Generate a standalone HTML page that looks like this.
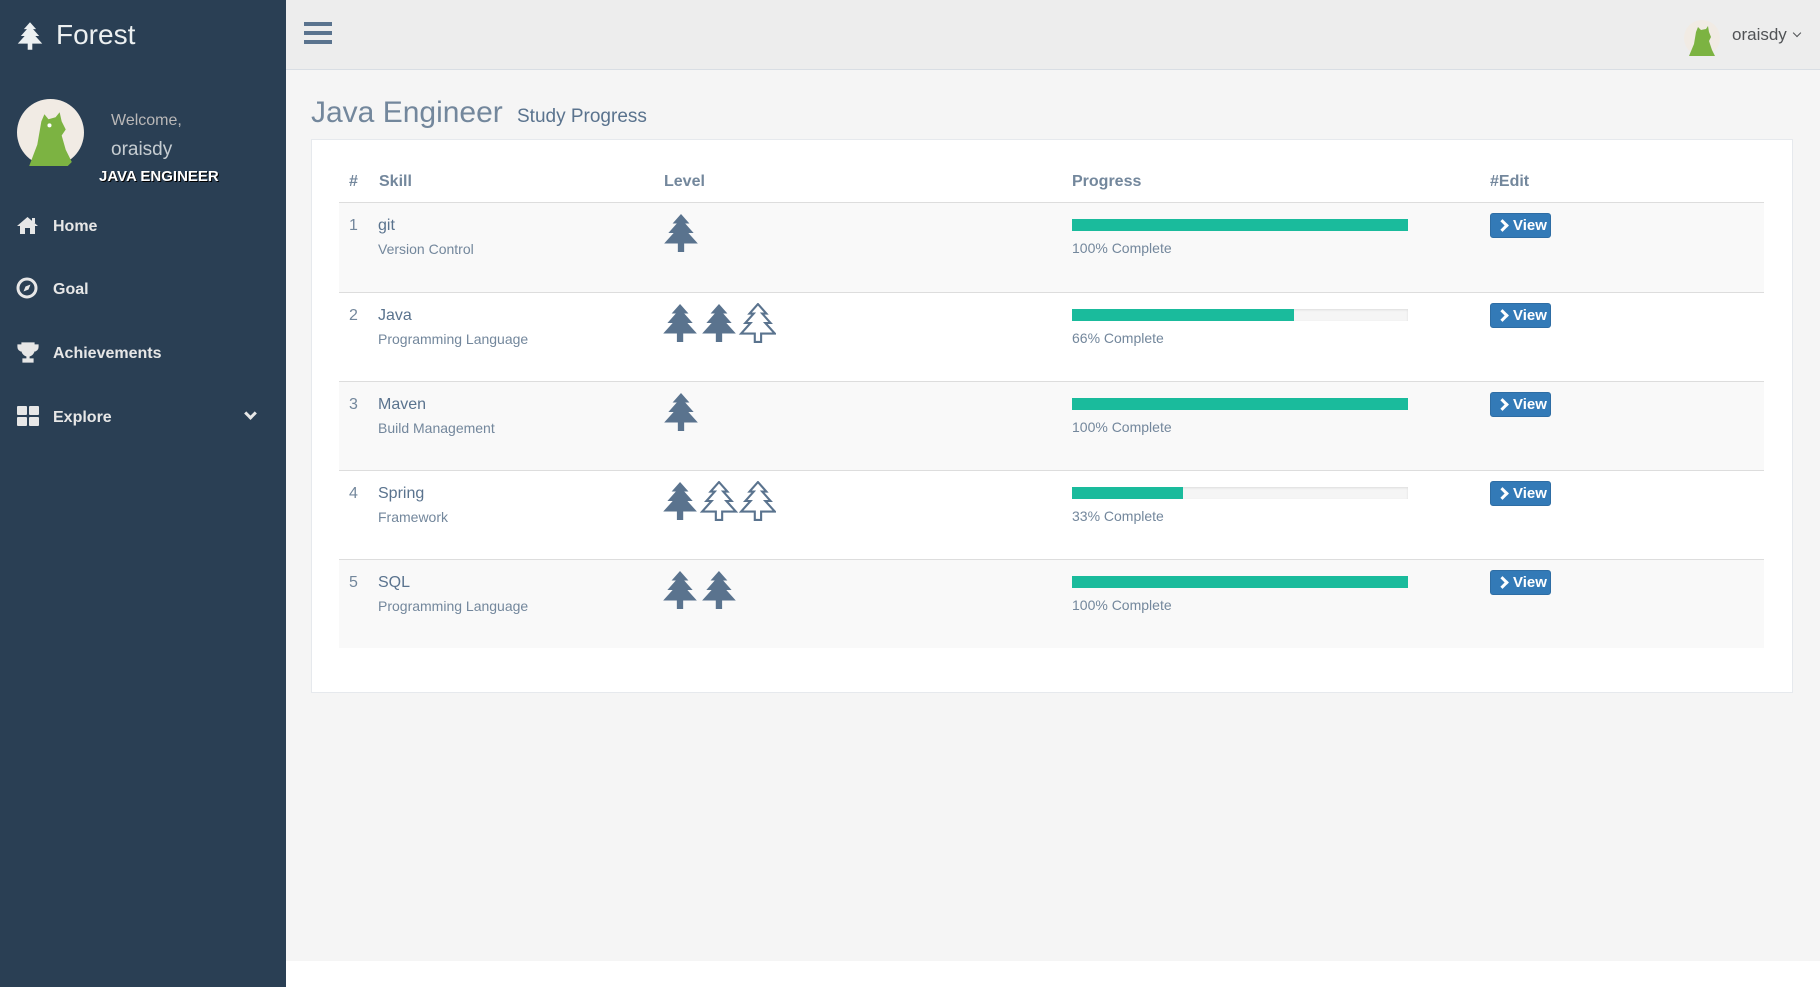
<!DOCTYPE html>
<html><head><meta charset="utf-8"><style>
*{box-sizing:border-box;margin:0;padding:0}
body{width:1820px;height:987px;overflow:hidden;font-family:"Liberation Sans",sans-serif;background:#f5f5f5;color:#73879C;position:relative}
.side{position:absolute;left:0;top:0;width:286px;height:987px;background:#2A3F54;color:#ECF0F1}
.top{position:absolute;left:286px;top:0;right:0;height:70px;background:#EDEDED;border-bottom:1px solid #D9DEE4}
.foot{position:absolute;left:286px;top:961px;right:0;bottom:0;background:#fff}
.abs{position:absolute;white-space:nowrap}
.nav{position:absolute;left:53px;font-size:16px;font-weight:bold;color:#E7E7E7}
.panel{position:absolute;left:311px;top:139px;width:1482px;height:554px;background:#fff;border:1px solid #E6E9ED}
.row{position:absolute;left:339px;width:1425px;height:89px;border-top:1px solid #ddd}
.th{position:absolute;top:173px;font-size:16px;font-weight:bold;color:#73879C}
.bar{position:absolute;left:733px;top:16px;width:336px;height:12px;background:#f5f5f5;box-shadow:inset 0 1px 2px rgba(0,0,0,.1)}
.bar i{display:block;height:100%;background:#1ABB9C}
.btn{position:absolute;left:1151px;top:10px;width:61px;height:25px;background:#337ab7;border:1px solid #2e6da4;border-radius:3px;color:#fff;font-size:15px;font-weight:bold;line-height:23px;padding-left:22px}
.btn:before{content:"";position:absolute;left:7px;top:7px;width:6px;height:6px;border-top:3px solid #fff;border-right:3px solid #fff;transform:rotate(45deg)}
.n{position:absolute;left:10px;top:14px;font-size:16px}
.sk{position:absolute;left:39px;top:14px;font-size:16px;color:#5A738E}
.sub{position:absolute;left:39px;top:38px;font-size:14px}
.pc{position:absolute;left:733px;top:37px;font-size:14px}
.tr{position:absolute;top:10px;left:323px}
</style></head><body>
<svg width="0" height="0" style="position:absolute"><defs>
<path id="tree" d="M17 1 L25 10 L21 10 L29 19 L24 19 L33 29 L20 29 L20 37 L14 37 L14 29 L1 29 L10 19 L5 19 L13 10 L9 10 Z"/>
</defs></svg>
<div class="side">
<svg class="abs" style="left:17px;top:21px" width="26" height="30" viewBox="0 0 34 38"><use href="#tree" fill="#ECF0F1"/></svg>
<div class="abs" style="left:56px;top:19px;font-size:28px;color:#ECF0F1">Forest</div>
<svg class="abs" style="left:17px;top:99px" width="67" height="67" viewBox="0 0 66 66"><circle cx="33" cy="33" r="33" fill="#f1ebe4"/><path d="M12 66 L20 45 L24 22 L27 15 L31 20 L38 18 L42 13 L44 22 L48 30 L44 36 L48 50 L54 62 L50 66Z" fill="#7cb342"/><circle cx="32" cy="26" r="2" fill="#fff"/></svg>
<div class="abs" style="left:111px;top:112px;font-size:16px;color:#BAB8B8">Welcome,</div>
<div class="abs" style="left:111px;top:139px;font-size:19px;color:#ECF0F1;opacity:.8">oraisdy</div>
<div class="abs" style="left:99px;top:168px;font-size:15px;font-weight:bold;color:#fff;text-shadow:1px 1px 0 #000">JAVA ENGINEER</div>
<svg class="abs" style="left:17px;top:216px" width="21" height="18" viewBox="0 0 21 18"><path d="M10.5 1 L0 10 L3 10 L3 18 L8 18 L8 12 L13 12 L13 18 L18 18 L18 10 L21 10 Z" fill="#E7E7E7"/><rect x="15" y="2" width="3" height="5" fill="#E7E7E7"/></svg>
<div class="nav" style="top:218px">Home</div>
<svg class="abs" style="left:16px;top:277px" width="22" height="22" viewBox="0 0 22 22"><circle cx="11" cy="11" r="9" fill="none" stroke="#E7E7E7" stroke-width="3"/><path d="M14.5 7.5 L12.5 12.5 L7.5 14.5 L9.5 9.5Z" fill="#E7E7E7"/></svg>
<div class="nav" style="top:281px">Goal</div>
<svg class="abs" style="left:17px;top:342px" width="22" height="22" viewBox="0 0 22 22"><path d="M5 1 H17 V8 A6 6 0 0 1 12 14 V17 H16 V20 H6 V17 H10 V14 A6 6 0 0 1 5 8Z M5 3 H1 V5 A4 4 0 0 0 5 9 M17 3 H21 V5 A4 4 0 0 1 17 9" fill="#E7E7E7" stroke="#E7E7E7" stroke-width="1.2"/></svg>
<div class="nav" style="top:345px">Achievements</div>
<svg class="abs" style="left:17px;top:406px" width="22" height="20" viewBox="0 0 22 20"><rect x="0" y="0" width="10" height="9" rx="1" fill="#E7E7E7"/><rect x="12" y="0" width="10" height="9" rx="1" fill="#E7E7E7"/><rect x="0" y="11" width="10" height="9" rx="1" fill="#E7E7E7"/><rect x="12" y="11" width="10" height="9" rx="1" fill="#E7E7E7"/></svg>
<div class="nav" style="top:409px">Explore</div>
<div class="abs" style="left:246px;top:409px;width:9px;height:9px;border-right:3px solid #E7E7E7;border-bottom:3px solid #E7E7E7;transform:rotate(45deg)"></div>
</div>
<div class="top">
<div class="abs" style="left:18px;top:22px;width:28px;height:4px;background:#5A738E;box-shadow:0 9px 0 #5A738E,0 18px 0 #5A738E"></div>
<svg class="abs" style="left:1398px;top:20px" width="36" height="36" viewBox="0 0 36 36"><circle cx="18" cy="18" r="18" fill="#f1ebe4"/><path d="M5 36 L10 24 L12 12 L14 7 L17 10 L22 9 L24 6 L25 12 L27 17 L25 21 L28 30 L31 36Z" fill="#7cb342"/></svg>
<div class="abs" style="left:1446px;top:25px;font-size:17px;color:#515356">oraisdy</div>
<div class="abs" style="left:1508px;top:30px;width:6px;height:6px;border-right:1.5px solid #515356;border-bottom:1.5px solid #515356;transform:rotate(45deg)"></div>
</div>
<div class="abs" style="left:311px;top:96px;font-size:30px;color:#73879C">Java Engineer</div>
<div class="abs" style="left:517px;top:106px;font-size:19px;color:#5A738E">Study Progress</div>
<div class="panel"></div>
<div class="th" style="left:349px">#</div>
<div class="th" style="left:379px">Skill</div>
<div class="th" style="left:664px">Level</div>
<div class="th" style="left:1072px">Progress</div>
<div class="th" style="left:1490px">#Edit</div>
<div class="abs" style="left:339px;top:202px;width:1425px;height:2px;background:#ddd"></div>

<div class="row" style="top:203px;background:#f9f9f9;border-top:none">
<div class="n">1</div><div class="sk">git</div><div class="sub">Version Control</div>
<svg class="tr" width="38" height="40" viewBox="0 0 34 38"><use href="#tree" fill="#5A738E"/></svg>
<div class="bar"><i style="width:100%"></i></div><div class="pc">100% Complete</div><div class="btn">View</div></div>

<div class="row" style="top:292px;background:#fff">
<div class="n">2</div><div class="sk">Java</div><div class="sub">Programming Language</div>
<svg class="tr" width="114" height="40" viewBox="0 0 108 38"><use href="#tree" fill="#5A738E"/><use href="#tree" x="37" fill="#5A738E"/><use href="#tree" x="74" fill="none" stroke="#5A738E" stroke-width="2"/></svg>
<div class="bar"><i style="width:66%"></i></div><div class="pc">66% Complete</div><div class="btn">View</div></div>

<div class="row" style="top:381px;background:#f9f9f9">
<div class="n">3</div><div class="sk">Maven</div><div class="sub">Build Management</div>
<svg class="tr" width="38" height="40" viewBox="0 0 34 38"><use href="#tree" fill="#5A738E"/></svg>
<div class="bar"><i style="width:100%"></i></div><div class="pc">100% Complete</div><div class="btn">View</div></div>

<div class="row" style="top:470px;background:#fff">
<div class="n">4</div><div class="sk">Spring</div><div class="sub">Framework</div>
<svg class="tr" width="114" height="40" viewBox="0 0 108 38"><use href="#tree" fill="#5A738E"/><use href="#tree" x="37" fill="none" stroke="#5A738E" stroke-width="2"/><use href="#tree" x="74" fill="none" stroke="#5A738E" stroke-width="2"/></svg>
<div class="bar"><i style="width:33%"></i></div><div class="pc">33% Complete</div><div class="btn">View</div></div>

<div class="row" style="top:559px;background:#f9f9f9">
<div class="n">5</div><div class="sk">SQL</div><div class="sub">Programming Language</div>
<svg class="tr" width="76" height="40" viewBox="0 0 72 38"><use href="#tree" fill="#5A738E"/><use href="#tree" x="37" fill="#5A738E"/></svg>
<div class="bar"><i style="width:100%"></i></div><div class="pc">100% Complete</div><div class="btn">View</div></div>

<div class="foot"></div>
</body></html>
